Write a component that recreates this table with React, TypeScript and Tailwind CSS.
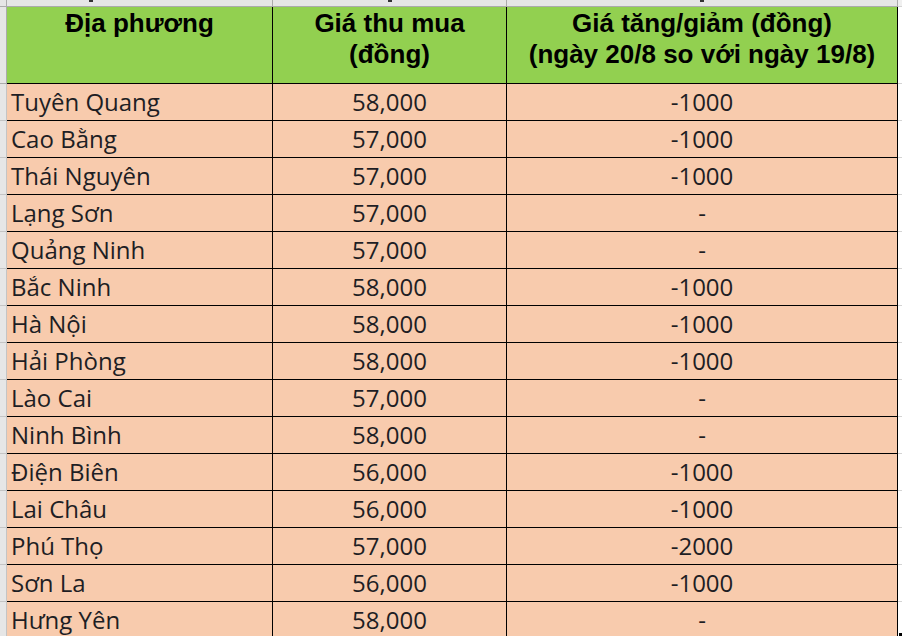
import React from "react";

const rows: [string, string, string][] = [
  ["Tuyên Quang", "58,000", "-1000"],
  ["Cao Bằng", "57,000", "-1000"],
  ["Thái Nguyên", "57,000", "-1000"],
  ["Lạng Sơn", "57,000", "-"],
  ["Quảng Ninh", "57,000", "-"],
  ["Bắc Ninh", "58,000", "-1000"],
  ["Hà Nội", "58,000", "-1000"],
  ["Hải Phòng", "58,000", "-1000"],
  ["Lào Cai", "57,000", "-"],
  ["Ninh Bình", "58,000", "-"],
  ["Điện Biên", "56,000", "-1000"],
  ["Lai Châu", "56,000", "-1000"],
  ["Phú Thọ", "57,000", "-2000"],
  ["Sơn La", "56,000", "-1000"],
  ["Hưng Yên", "58,000", "-"],
];

export default function App() {
  return (
    <div className="relative w-[902px] h-[636px] overflow-hidden bg-white">
      {/* Top strip (row above, cut off) */}
      <div className="flex h-[7px]">
        <div className="w-[7px] shrink-0 bg-[#e6e6e6] border-r border-b border-[#ababab]" />
        <div className="relative w-[266px] shrink-0 bg-[#e6e6e6] border-r border-b border-[#ababab]">
          <div className="absolute left-[82px] top-0 w-[4px] h-[2px] bg-[#333]" />
        </div>
        <div className="relative w-[234px] shrink-0 bg-[#e6e6e6] border-r border-b border-[#ababab]">
          <div className="absolute left-[115px] top-0 w-[4px] h-[2px] bg-[#333]" />
        </div>
        <div className="relative w-[391px] shrink-0 bg-[#e6e6e6] border-r border-b border-[#ababab]">
          <div className="absolute left-[193px] top-0 w-[4px] h-[2px] bg-[#333]" />
        </div>
        <div className="flex-1 bg-[#f0f0f0] border-b border-[#d4d4d4]" />
      </div>

      {/* Header row */}
      <div
        className="flex h-[77px] text-[26px] leading-[31px] font-bold text-black whitespace-nowrap"
        style={{ fontFamily: '"Liberation Sans", Arial, sans-serif' }}
      >
        <div className="w-[7px] shrink-0 bg-[#e6e6e6] border-r border-b border-[#ababab]" />
        <div className="w-[266px] shrink-0 bg-[#92d050] border-r border-b border-black pt-[1px] text-center">
          Địa phương
        </div>
        <div className="w-[234px] shrink-0 bg-[#92d050] border-r border-b border-black pt-[1px] text-center">
          <div>Giá thu mua</div>
          <div>(đồng)</div>
        </div>
        <div className="w-[391px] shrink-0 bg-[#92d050] border-r border-b border-black pt-[1px] text-center">
          <div>Giá tăng/giảm (đồng)</div>
          <div>(ngày 20/8 so với ngày 19/8)</div>
        </div>
        <div className="flex-1 border-b border-[#d4d4d4]" />
      </div>

      {/* Body rows */}
      {rows.map(([place, price, change]) => (
        <div
          key={place}
          className="flex h-[37px] text-[24px] leading-[36px] text-[#1e1e24]"
          style={{ fontFamily: '"Open Sans", "Noto Sans", sans-serif' }}
        >
          <div className="w-[7px] shrink-0 bg-[#e6e6e6] border-r border-b border-[#c4c4c4]" />
          <div className="w-[266px] shrink-0 bg-[#f8cbad] border-r border-b border-black pl-[4px] whitespace-nowrap">
            {place}
          </div>
          <div className="w-[234px] shrink-0 bg-[#f8cbad] border-r border-b border-black text-center">
            {price}
          </div>
          <div className="w-[391px] shrink-0 bg-[#f8cbad] border-r border-b border-black text-center">
            {change}
          </div>
          <div className="flex-1 border-b border-[#d4d4d4]" />
        </div>
      ))}

      {/* Fill handle */}
      <div className="absolute left-[898px] top-[632px] w-[5px] h-[5px] bg-black border border-white" />
    </div>
  );
}
